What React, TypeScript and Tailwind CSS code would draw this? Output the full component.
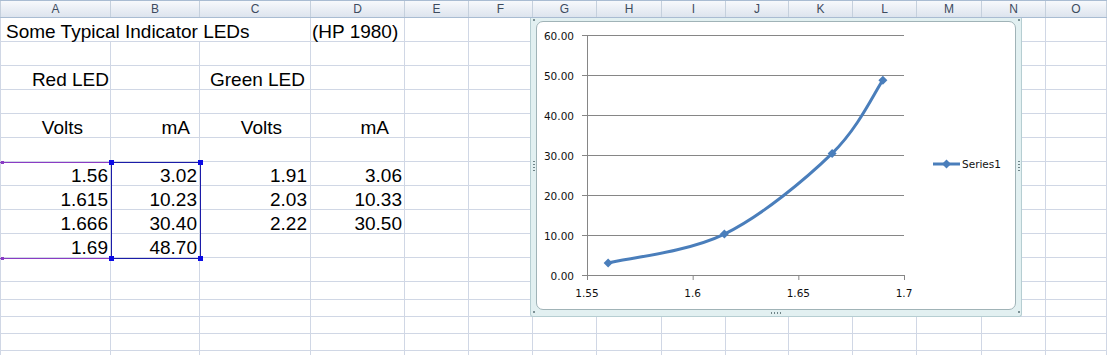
import React from 'react';

/* ── sheet geometry ── */
const COLS = ['A', 'B', 'C', 'D', 'E', 'F', 'G', 'H', 'I', 'J', 'K', 'L', 'M', 'N', 'O'];
const COL_W = [
  'w-[111px]', 'w-[89px]', 'w-[111px]', 'w-[94px]', 'w-[64px]', 'w-[64px]', 'w-[64px]', 'w-[65px]',
  'w-[64px]', 'w-[63px]', 'w-[64px]', 'w-[64px]', 'w-[65px]', 'w-[64px]', 'flex-1',
];
const ROW_H = [
  'h-[24px]', 'h-[24px]', 'h-[24px]', 'h-[24px]', 'h-[24px]', 'h-[24px]', 'h-[24px]', 'h-[24px]',
  'h-[24px]', 'h-[24px]', 'h-[24px]', 'h-[18px]', 'h-[17px]', 'h-[17px]', 'h-[17px]', 'h-[17px]',
];

type Cell = { text: string; cls: string };

const num = (text: string, pr: string): Cell => ({ text, cls: `justify-end ${pr}` });

// row index (0-based) -> column index -> cell
const CELLS: Record<number, Record<number, Cell>> = {
  2: {
    0: { text: 'Red LED', cls: 'justify-end pr-[1px]' },
    2: { text: 'Green LED', cls: 'justify-end pr-[5px]' },
  },
  4: {
    0: { text: 'Volts', cls: 'justify-end pr-[27px]' },
    1: { text: 'mA', cls: 'justify-end pr-[9px]' },
    2: { text: 'Volts', cls: 'justify-end pr-[28px]' },
    3: { text: 'mA', cls: 'justify-end pr-[15px]' },
  },
  6: { 0: num('1.56', 'pr-[2px]'), 1: num('3.02', 'pr-[2px]'), 2: num('1.91', 'pr-[3px]'), 3: num('3.06', 'pr-[2px]') },
  7: { 0: num('1.615', 'pr-[2px]'), 1: num('10.23', 'pr-[2px]'), 2: num('2.03', 'pr-[3px]'), 3: num('10.33', 'pr-[2px]') },
  8: { 0: num('1.666', 'pr-[2px]'), 1: num('30.40', 'pr-[2px]'), 2: num('2.22', 'pr-[3px]'), 3: num('30.50', 'pr-[2px]') },
  9: { 0: num('1.69', 'pr-[2px]'), 1: num('48.70', 'pr-[2px]') },
};

/* ── chart geometry (page coordinates) ── */
const X0 = 587;
const X1 = 904;
const Y0 = 275;
const xs = (v: number) => X0 + ((v - 1.55) / 0.15) * (X1 - X0);
const ys = (v: number) => Y0 - v * 4;

const POINTS: [number, number][] = [
  [1.56, 3.02],
  [1.615, 10.23],
  [1.666, 30.4],
  [1.69, 48.7],
];

function smoothPath(pts: [number, number][]) {
  const p = pts.map(([x, y]) => [xs(x), ys(y)]);
  let d = `M${p[0][0]},${p[0][1]}`;
  for (let i = 0; i < p.length - 1; i++) {
    const a = p[i - 1] ?? p[i];
    const b = p[i];
    const c = p[i + 1];
    const e = p[i + 2] ?? c;
    const c1 = [b[0] + (c[0] - a[0]) / 6, b[1] + (c[1] - a[1]) / 6];
    const c2 = [c[0] - (e[0] - b[0]) / 6, c[1] - (e[1] - b[1]) / 6];
    d += ` C${c1[0]},${c1[1]} ${c2[0]},${c2[1]} ${c[0]},${c[1]}`;
  }
  return d;
}

function Diamond({ x, y }: { x: number; y: number }) {
  const r = 4.5;
  return <polygon points={`${x},${y - r} ${x + r},${y} ${x},${y + r} ${x - r},${y}`} fill="#4a7ebb" />;
}

/* ── frame grips ── */
const Dot = () => <span className="h-[2px] w-[2px] bg-[#7d9296]" />;

function Grip({ vertical }: { vertical?: boolean }) {
  return (
    <div className={vertical ? 'flex flex-col gap-[2px]' : 'flex gap-[2px]'}>
      {[0, 1, 2, 3].map((i) => (
        <span key={i} className={vertical ? 'h-[1px] w-[2px] bg-[#6f8488]' : 'h-[2px] w-[1px] bg-[#6f8488]'} />
      ))}
    </div>
  );
}

function SideBand() {
  return (
    <div className="flex w-[5px] flex-col items-center justify-between pb-[3px] pt-[1px]">
      <Dot />
      <Grip vertical />
      <Dot />
    </div>
  );
}

function Chart() {
  const yTicks = [0, 10, 20, 30, 40, 50, 60];
  const xTicks = [1.55, 1.6, 1.65, 1.7];
  return (
    <div className="absolute left-[530px] top-[18px] flex h-[299px] w-[492px] rounded-b-[3px] border-x border-b border-[#b6ced2] bg-[#e2f0f1]">
      <SideBand />
      <div className="flex flex-1 flex-col">
        <div className="h-[3px]" />
        <div className="flex-1 rounded-[7px] border border-[#a0b3b7] bg-white">
          <svg
            width={478}
            height={287}
            viewBox="537 22 478 287"
            className="block font-['DejaVu_Sans',sans-serif]"
          >
            {/* gridlines + y labels */}
            {yTicks.map((t) => (
              <g key={t}>
                <line x1={582} x2={X1} y1={ys(t) + 0.5} y2={ys(t) + 0.5} stroke="#868686" strokeWidth={1} />
                <text x={574} y={ys(t) + 4.5} textAnchor="end" fontSize={10.5} fill="#111">
                  {t.toFixed(2)}
                </text>
              </g>
            ))}
            {/* y axis */}
            <line x1={X0 + 0.5} x2={X0 + 0.5} y1={ys(60)} y2={Y0 + 5} stroke="#868686" strokeWidth={1} />
            {/* x ticks + labels */}
            {xTicks.map((t) => (
              <g key={t}>
                <line x1={xs(t) + 0.5} x2={xs(t) + 0.5} y1={Y0} y2={Y0 + 5} stroke="#868686" strokeWidth={1} />
                <text x={xs(t)} y={297} textAnchor="middle" fontSize={10.5} fill="#111">
                  {String(t)}
                </text>
              </g>
            ))}
            {/* series */}
            <path d={smoothPath(POINTS)} fill="none" stroke="#4a7ebb" strokeWidth={3} strokeLinecap="round" />
            {POINTS.map(([x, y]) => (
              <Diamond key={x} x={xs(x)} y={ys(y)} />
            ))}
            {/* legend */}
            <line x1={933} x2={960} y1={164} y2={164} stroke="#4a7ebb" strokeWidth={3} />
            <Diamond x={946.5} y={164} />
            <text x={962} y={168} fontSize={10.5} fill="#111">
              Series1
            </text>
          </svg>
        </div>
        <div className="flex h-[6px] items-center justify-center">
          <Grip />
        </div>
      </div>
      <SideBand />
    </div>
  );
}

/* ── chart source ranges ── */
const Handle = ({ cls }: { cls: string }) => <span className={`absolute ${cls}`} />;

function Selection() {
  return (
    <div className="absolute left-0 top-[162px] flex">
      {/* A7:A10 — x values */}
      <div className="relative h-[97px] w-[111px] border-y border-[#8a3cc4]">
        <Handle cls="-top-[2px] left-[1px] h-[3px] w-[3px] bg-[#8a3cc4]" />
        <Handle cls="-bottom-[2px] left-[1px] h-[3px] w-[3px] bg-[#8a3cc4]" />
      </div>
      {/* B7:B10 — y values */}
      <div className="relative h-[97px] w-[90px] border border-[#1c1ca8]">
        <Handle cls="-left-[3px] -top-[3px] h-[5px] w-[5px] bg-[#0b0be6]" />
        <Handle cls="-right-[3px] -top-[3px] h-[5px] w-[5px] bg-[#0b0be6]" />
        <Handle cls="-bottom-[3px] -left-[3px] h-[5px] w-[5px] bg-[#0b0be6]" />
        <Handle cls="-bottom-[3px] -right-[3px] h-[5px] w-[5px] bg-[#0b0be6]" />
      </div>
    </div>
  );
}

export default function App() {
  return (
    <div className="relative h-[355px] w-[1107px] overflow-hidden bg-white font-['Liberation_Sans',Arial,sans-serif] text-black">
      {/* column headers */}
      <div className="flex h-[18px] border-y border-[#a9bcd2] bg-linear-to-b from-[#f7f9fc] to-[#dde4ee]">
        {COLS.map((c, i) => (
          <div
            key={c}
            className={`${COL_W[i]} flex shrink-0 items-center justify-center border-r border-[#c5d0dd] text-[12px] leading-none text-[#3d4b5e] ${i === 0 ? 'border-l' : ''}`}
          >
            {c}
          </div>
        ))}
      </div>

      {/* rows */}
      {ROW_H.map((h, r) => (
        <div key={r} className={`flex ${h}`}>
          {r === 0 ? (
            <>
              <div className="flex w-[311px] shrink-0 items-end border-b border-l border-r border-[#d0d7e5] pl-[5px] text-[19px] leading-[18px] whitespace-nowrap">
                Some Typical Indicator LEDs
              </div>
              <div className="flex w-[94px] shrink-0 items-end border-b border-r border-[#d0d7e5] pl-[1px] text-[19px] leading-[18px] whitespace-nowrap">
                (HP 1980)
              </div>
              {COL_W.slice(4).map((w, i) => (
                <div key={i} className={`${w} shrink-0 border-b border-r border-[#d0d7e5]`} />
              ))}
            </>
          ) : (
            COL_W.map((w, c) => {
              const cell = CELLS[r]?.[c];
              return (
                <div
                  key={c}
                  className={`${w} flex shrink-0 items-end border-b border-r border-[#d0d7e5] text-[19px] leading-[18px] whitespace-nowrap ${c === 0 ? 'border-l' : ''} ${cell ? cell.cls : ''}`}
                >
                  {cell?.text}
                </div>
              );
            })
          )}
        </div>
      ))}

      <Selection />
      <Chart />
    </div>
  );
}
